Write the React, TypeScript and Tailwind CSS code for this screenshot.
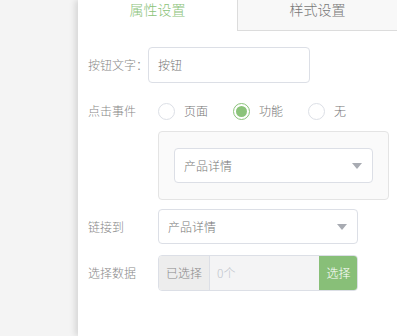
import React, { useState } from 'react';

const font = { fontFamily: '"Noto Sans CJK SC", "Noto Sans", sans-serif' };

const Caret = () => (
  <svg width="10" height="6" viewBox="0 0 10 6" className="shrink-0">
    <path d="M0 0h10L5 6z" fill="#a8abb2" />
  </svg>
);

const Select = ({ value, className = '' }: { value: string; className?: string }) => (
  <div
    className={`flex h-[35px] items-center justify-between rounded-[4px] border border-[#dcdfe6] bg-white pl-[9px] pr-[10px] ${className}`}
  >
    <span className="text-[12px] text-[#777]">{value}</span>
    <Caret />
  </div>
);

const Radio = ({ label, checked, onClick }: { label: string; checked: boolean; onClick: () => void }) => (
  <button type="button" onClick={onClick} className="flex items-center">
    <span
      className={`flex h-[17px] w-[17px] items-center justify-center rounded-full border bg-white ${
        checked ? 'border-[#8bc37a]' : 'border-[#dcdfe6]'
      }`}
    >
      {checked && <span className="h-[11px] w-[11px] rounded-full bg-[#8bc37a]" />}
    </span>
    <span className="ml-[9px] text-[12px] text-[#777]">{label}</span>
  </button>
);

export default function App() {
  const [event, setEvent] = useState('功能');

  return (
    <div className="flex h-[336px] w-[397px] overflow-hidden bg-[#f4f4f4] font-light" style={font}>
      <div className="w-[78px] shrink-0" />
      <div className="flex-1 bg-white shadow-[-3px_0_6px_rgba(0,0,0,0.12)]">
        <div className="flex h-[31px]">
          <div className="flex w-[159px] items-start justify-center text-[14px] leading-[18px] text-[#8bc37a]">
            属性设置
          </div>
          <div className="flex flex-1 items-start justify-center border-b border-l border-[#dcdcdc] bg-[#f8f8f8] text-[14px] leading-[18px] text-[#777]">
            样式设置
          </div>
        </div>

        <div className="pl-[10px] text-[12px] text-[#888]">
          <div className="mt-[16px] flex items-center">
            <span className="w-[60px]">按钮文字：</span>
            <div className="flex h-[36px] w-[162px] items-center rounded-[4px] border border-[#dcdfe6] pl-[9px] text-[#777]">
              按钮
            </div>
          </div>

          <div className="mt-[19px] flex items-center">
            <span className="w-[70px]">点击事件</span>
            <div className="flex items-center gap-[25px]">
              <Radio label="页面" checked={event === '页面'} onClick={() => setEvent('页面')} />
              <Radio label="功能" checked={event === '功能'} onClick={() => setEvent('功能')} />
              <Radio label="无" checked={event === '无'} onClick={() => setEvent('无')} />
            </div>
          </div>

          <div className="ml-[70px] mt-[11px] w-[231px] rounded-[4px] border border-[#e4e4e4] bg-[#fafafa] px-[15px] py-[16px]">
            <Select value="产品详情" />
          </div>

          <div className="mt-[9px] flex items-center">
            <span className="w-[70px]">链接到</span>
            <Select value="产品详情" className="w-[200px]" />
          </div>

          <div className="mt-[11px] flex items-center">
            <span className="w-[70px]">选择数据</span>
            <div className="flex h-[36px] w-[200px] overflow-hidden rounded-[4px] border border-[#dcdfe6]">
              <span className="flex w-[51px] items-center justify-center border-r border-[#dcdfe6] bg-[#ededed] text-[#888]">
                已选择
              </span>
              <span className="flex flex-1 items-center bg-[#f4f4f5] pl-[7px] text-[#c0c4cc]">0个</span>
              <button type="button" className="-my-px -mr-px w-[39px] bg-[#88bf78] text-[12px] text-white">
                选择
              </button>
            </div>
          </div>
        </div>
      </div>
    </div>
  );
}
